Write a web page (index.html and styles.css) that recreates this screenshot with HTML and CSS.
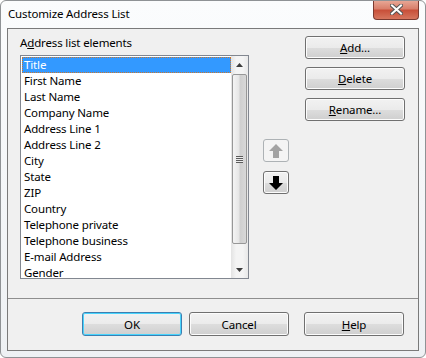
FILE: index.html
```html
<!DOCTYPE html>
<html lang="en">
<head>
    <meta charset="UTF-8">
    <title>Customize Address List</title>
    <link rel="stylesheet" href="styles.css">
</head>
<body>
    <div class="window">
        <div class="titlebar">
            <span class="title">Customize Address List</span>
            <button class="close-btn" aria-label="Close">
                <svg width="13" height="11" viewBox="0 0 13 11">
                    <path d="M2 1.5 L11 9.5 M11 1.5 L2 9.5" stroke="#555555" stroke-width="4" stroke-linecap="square"/>
                    <path d="M2 1.5 L11 9.5 M11 1.5 L2 9.5" stroke="#ffffff" stroke-width="2" stroke-linecap="square"/>
                </svg>
            </button>
        </div>

        <div class="client">
            <div class="main">
                <div class="list-col">
                    <div class="group-label">A<u>d</u>dress list elements</div>
                    <div class="listbox">
                        <ul class="items">
                            <li class="selected">Title</li>
                            <li>First Name</li>
                            <li>Last Name</li>
                            <li>Company Name</li>
                            <li>Address Line 1</li>
                            <li>Address Line 2</li>
                            <li>City</li>
                            <li>State</li>
                            <li>ZIP</li>
                            <li>Country</li>
                            <li>Telephone private</li>
                            <li>Telephone business</li>
                            <li>E-mail Address</li>
                            <li>Gender</li>
                        </ul>
                        <div class="scrollbar">
                            <div class="sb-arrow">
                                <svg width="7" height="4" viewBox="0 0 7 4"><path d="M3.5 0 L7 4 L0 4 Z" fill="#3c3c3c"/></svg>
                            </div>
                            <div class="sb-track">
                                <div class="sb-thumb">
                                    <div class="grip"></div>
                                </div>
                            </div>
                            <div class="sb-arrow">
                                <svg width="7" height="4" viewBox="0 0 7 4"><path d="M0 0 L7 0 L3.5 4 Z" fill="#3c3c3c"/></svg>
                            </div>
                        </div>
                    </div>
                </div>

                <div class="move-col">
                    <button class="btn move-btn" disabled aria-label="Move up">
                        <svg width="16" height="16" viewBox="0 0 16 16"><path d="M8 1 L15 8 L11 8 L11 15 L5 15 L5 8 L1 8 Z" fill="#a3a3a3"/></svg>
                    </button>
                    <button class="btn move-btn" aria-label="Move down">
                        <svg width="16" height="16" viewBox="0 0 16 16"><path d="M8 15 L15 8 L11 8 L11 1 L5 1 L5 8 L1 8 Z" fill="#000000"/></svg>
                    </button>
                </div>

                <div class="action-col">
                    <button class="btn"><u>A</u>dd...</button>
                    <button class="btn"><u>D</u>elete</button>
                    <button class="btn"><u>R</u>ename...</button>
                </div>
            </div>

            <div class="footer">
                <button class="btn btn-default">OK</button>
                <button class="btn btn-cancel">Cancel</button>
                <button class="btn btn-help"><u>H</u>elp</button>
            </div>
        </div>
    </div>
</body>
</html>
```

FILE: styles.css
```css
body {
    margin: 0;
    font-family: "Noto Sans", sans-serif;
    font-size: 11.5px;
    letter-spacing: -0.15px;
    color: #000;
    background: #ffffff;
}
.window {
    width: 426px;
    height: 358px;
    box-sizing: border-box;
    border: 1px solid #8f9295;
    border-radius: 6px;
    background: linear-gradient(#fbfcfd, #eef1f4);
    display: flex;
    flex-direction: column;
    overflow: hidden;
}
.titlebar {
    height: 27px;
    display: flex;
    justify-content: space-between;
    align-items: flex-start;
}
.title {
    padding: 5px 0 0 7px;
    line-height: 16px;
}
.close-btn {
    width: 46px;
    height: 20px;
    margin: -1px 6px 0 0;
    padding: 0;
    border: 1px solid #7b3a30;
    border-top: none;
    border-radius: 0 0 4px 4px;
    background: linear-gradient(#e9ab9a 0%, #d9806c 45%, #c8503a 55%, #d6765e 100%);
    display: flex;
    align-items: center;
    justify-content: center;
}
.client {
    margin: 0 6px 6px 6px;
    height: 323px;
    box-sizing: border-box;
    border: 1px solid #7a7a7a;
    background: #f0f0f0;
    display: flex;
    flex-direction: column;
}
.main {
    height: 270px;
    box-sizing: border-box;
    border-bottom: 1px solid #8e8e8e;
    padding: 6px 13px 0 12px;
    display: flex;
}
.group-label {
    line-height: 16px;
    margin-bottom: 4px;
}
.listbox {
    width: 229px;
    height: 224px;
    box-sizing: border-box;
    border: 1px solid #828790;
    background: #fff;
    display: flex;
    overflow: hidden;
}
.items {
    list-style: none;
    margin: 0;
    padding: 1px 0 0 1px;
    width: 210px;
}
.items li {
    height: 16px;
    line-height: 14px;
    padding-left: 1px;
    box-sizing: border-box;
    border: 1px solid transparent;
    white-space: nowrap;
}
.items li.selected {
    background: #3399ff;
    color: #fff;
    border: 1px dotted #c9772f;
}
.scrollbar {
    width: 17px;
    display: flex;
    flex-direction: column;
    background: linear-gradient(90deg, #e3e3e3, #f4f4f4 30%, #f4f4f4 70%, #e8e8e8);
}
.sb-arrow {
    height: 17px;
    display: flex;
    align-items: center;
    justify-content: center;
}
.sb-track {
    flex: 1;
    padding: 1px 1px 0 1px;
}
.sb-thumb {
    height: 170px;
    box-sizing: border-box;
    border: 1px solid #979797;
    border-radius: 2px;
    background: linear-gradient(90deg, #f4f4f4, #e6e6e6 45%, #cfcfcf 55%, #d8d8d8);
    display: flex;
    align-items: center;
    justify-content: center;
}
.grip {
    width: 7px;
    height: 7px;
    background: repeating-linear-gradient(#5c5c5c 0, #5c5c5c 1px, #ececec 1px, #ececec 2px);
}
.move-col {
    margin: 104px 0 0 14px;
    display: flex;
    flex-direction: column;
    gap: 9px;
}
.action-col {
    margin: 1px 0 0 16px;
    display: flex;
    flex-direction: column;
    gap: 8px;
}
.btn {
    width: 100px;
    height: 23px;
    padding: 0;
    font-family: "Noto Sans", sans-serif;
    font-size: 11.5px;
    letter-spacing: -0.15px;
    color: #000;
    border: 1px solid #707070;
    border-radius: 3px;
    background: linear-gradient(#f2f2f2 0%, #ebebeb 50%, #dddddd 51%, #cfcfcf 100%);
    box-shadow: inset 0 0 0 1px #fcfcfc;
}
.move-btn {
    width: 26px;
    height: 23px;
    display: flex;
    align-items: center;
    justify-content: center;
}
.move-btn:disabled {
    border-color: #adb2b5;
    background: #f4f4f4;
    box-shadow: none;
}
.footer {
    flex: 1;
    padding: 13px 14px 0 0;
    display: flex;
    justify-content: flex-end;
    align-items: flex-start;
}
.footer .btn {
    height: 24px;
}
.btn-default {
    border-color: #3c7fb1;
    box-shadow: inset 0 0 0 1px #48d4fd;
}
.btn-cancel {
    margin-left: 7px;
}
.btn-help {
    margin-left: 15px;
}
```
